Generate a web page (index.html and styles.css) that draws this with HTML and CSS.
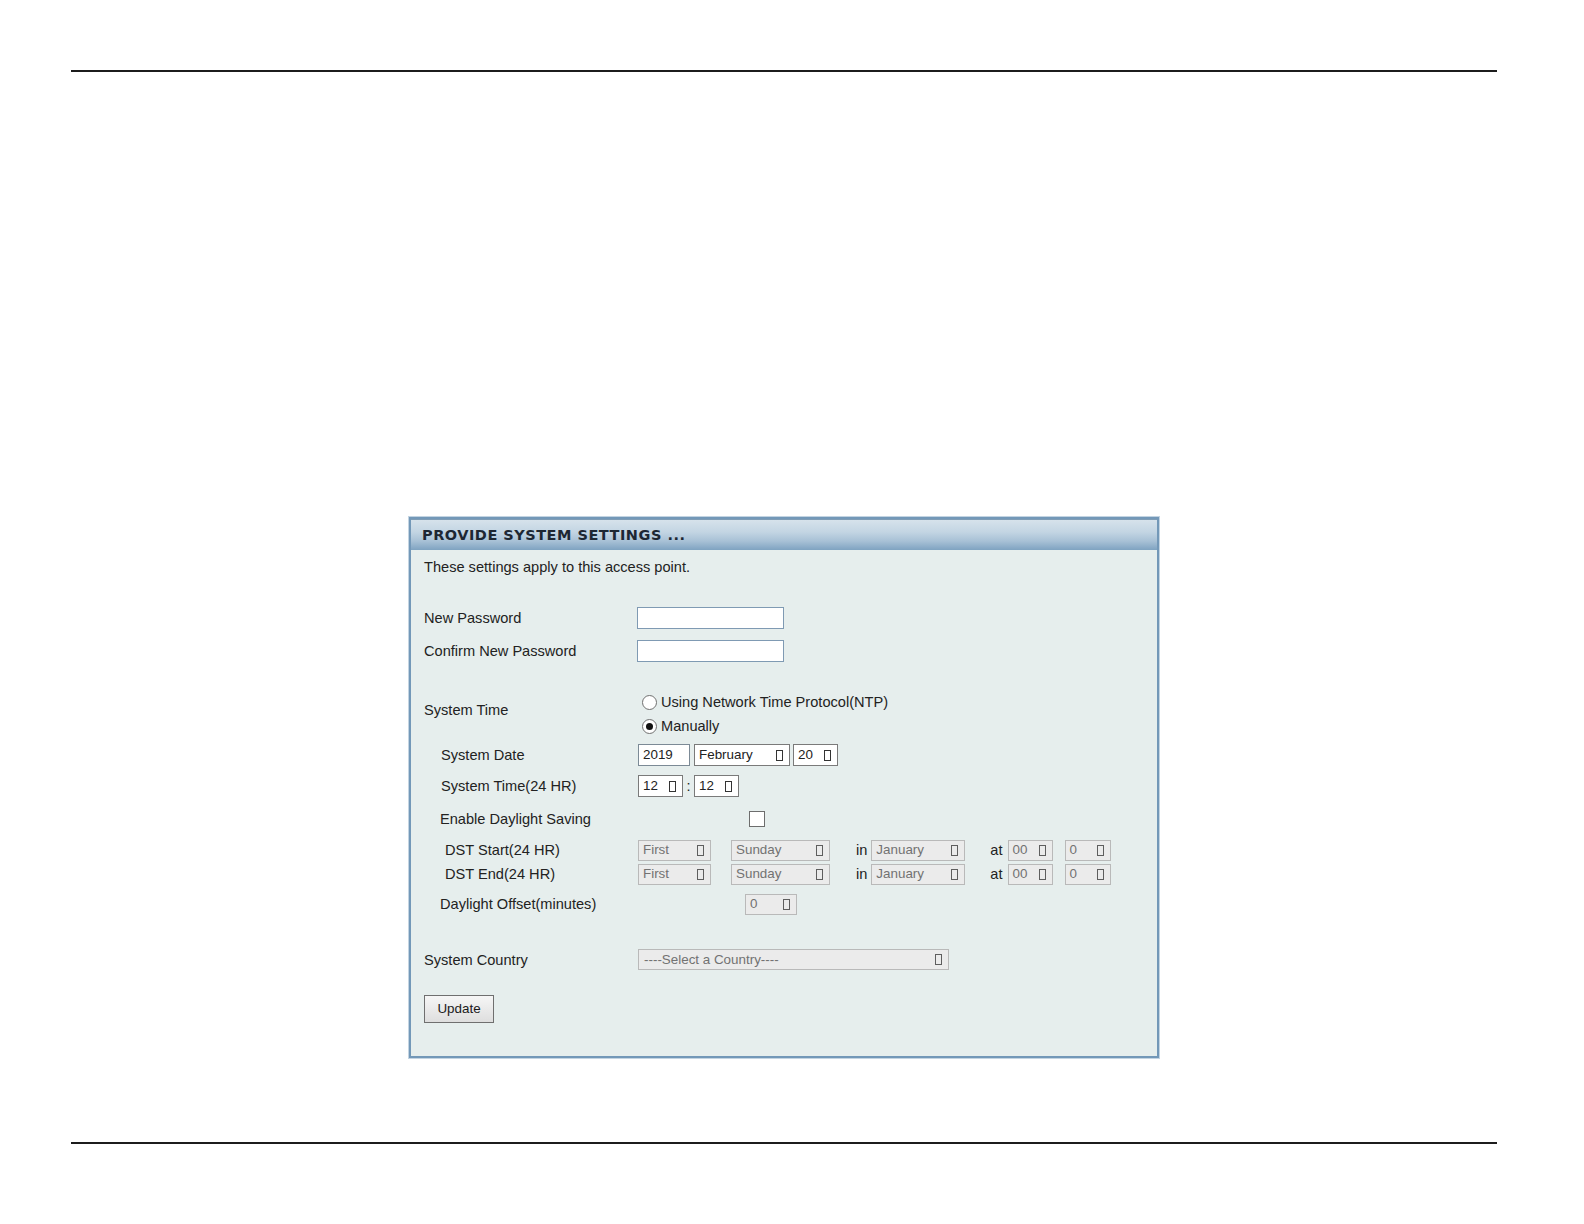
FILE: index.html
```html
<!DOCTYPE html>
<html>
<head>
<meta charset="utf-8">
<title>Provide System Settings</title>
<link rel="stylesheet" href="styles.css">
</head>
<body>
<div class="page">
  <div class="rule rule-top"></div>

  <div class="panel">
    <div class="panel-head">PROVIDE SYSTEM SETTINGS ...</div>
    <div class="panel-body">
      <div class="intro">These settings apply to this access point.</div>

      <div class="row row-pw">
        <div class="label">New Password</div>
        <div class="input pw"></div>
      </div>
      <div class="row row-pw2">
        <div class="label">Confirm New Password</div>
        <div class="input pw"></div>
      </div>

      <div class="row row-time">
        <div class="label label-time">System Time</div>
        <div class="radios">
          <div class="radio-line"><span class="radio"></span><span>Using Network Time Protocol(NTP)</span></div>
          <div class="radio-line"><span class="radio checked"></span><span>Manually</span></div>
        </div>
      </div>

      <div class="row row-date">
        <div class="label sub">System Date</div>
        <div class="input year">2019</div>
        <div class="select month">February<span class="arrow"></span></div>
        <div class="select day">20<span class="arrow"></span></div>
      </div>

      <div class="row row-clock">
        <div class="label sub">System Time(24 HR)</div>
        <div class="select hr">12<span class="arrow"></span></div>
        <div class="colon">:</div>
        <div class="select hr">12<span class="arrow"></span></div>
      </div>

      <div class="row row-dst">
        <div class="label sub2">Enable Daylight Saving</div>
        <span class="checkbox"></span>
      </div>

      <div class="row row-dst-start">
        <div class="label sub3">DST Start(24 HR)</div>
        <div class="select dis w-first">First<span class="arrow"></span></div>
        <div class="select dis w-week">Sunday<span class="arrow"></span></div>
        <div class="word word-in">in</div>
        <div class="select dis w-month">January<span class="arrow"></span></div>
        <div class="word word-at">at</div>
        <div class="select dis w-hr">00<span class="arrow"></span></div>
        <div class="select dis w-min">0<span class="arrow"></span></div>
      </div>
      <div class="row row-dst-end">
        <div class="label sub3">DST End(24 HR)</div>
        <div class="select dis w-first">First<span class="arrow"></span></div>
        <div class="select dis w-week">Sunday<span class="arrow"></span></div>
        <div class="word word-in">in</div>
        <div class="select dis w-month">January<span class="arrow"></span></div>
        <div class="word word-at">at</div>
        <div class="select dis w-hr">00<span class="arrow"></span></div>
        <div class="select dis w-min">0<span class="arrow"></span></div>
      </div>

      <div class="row row-offset">
        <div class="label sub2">Daylight Offset(minutes)</div>
        <div class="select dis w-offset">0<span class="arrow"></span></div>
      </div>

      <div class="row row-country">
        <div class="label">System Country</div>
        <div class="select dis w-country">----Select a Country----<span class="arrow"></span></div>
      </div>

      <div class="row row-btn">
        <div class="button">Update</div>
      </div>
    </div>
  </div>

  <div class="rule rule-bottom"></div>
</div>
</body>
</html>
```

FILE: styles.css
```css
html, body {
  margin: 0;
  padding: 0;
  background: #ffffff;
}

.page {
  width: 1584px;
  height: 1224px;
  padding-top: 70px;
  box-sizing: border-box;
  font-family: "Liberation Sans", Arial, sans-serif;
  color: #222222;
}

.rule {
  margin-left: 71px;
  width: 1426px;
  height: 2px;
  background: #1c1c1c;
}

.rule-bottom {
  margin-top: 84px;
}

.panel {
  margin-top: 445px;
  margin-left: 409px;
  width: 750px;
  box-sizing: border-box;
  border: 2px solid #7398b8;
  box-shadow: 0 0 0 1px #c3d4e2;
  background: #e6eeed;
}

.panel-head {
  height: 31px;
  box-sizing: border-box;
  border-top: 1px solid #7f9db6;
  padding-left: 11px;
  background: linear-gradient(#d6e2eb 0%, #c3d5e3 40%, #a8c1d6 70%, #7fa3c1 100%);
  font-family: "DejaVu Sans", Verdana, sans-serif;
  font-weight: bold;
  font-size: 14.5px;
  letter-spacing: 0.5px;
  line-height: 30px;
  color: #1d2733;
}

.panel-body {
  padding: 8px 0 33px 13px;
  font-size: 14.6px;
}

.intro {
  height: 18px;
  line-height: 18px;
}

.row {
  display: flex;
  align-items: center;
  height: 22px;
}

.label {
  width: 214px;
  flex: none;
  box-sizing: border-box;
  white-space: nowrap;
}

.label.sub { padding-left: 17px; }
.label.sub2 { padding-left: 16px; }
.label.sub3 { padding-left: 21px; }

.row-pw { margin-top: 31px; }
.row-pw2 { margin-top: 11px; }

.row-time {
  margin-top: 28px;
  height: 48px;
  align-items: flex-start;
}
.label-time {
  padding-top: 11px;
  line-height: 18px;
}
.radios {
  display: flex;
  flex-direction: column;
  margin-left: 4px;
}
.radio-line {
  display: flex;
  align-items: center;
  height: 24px;
}
.radio {
  width: 15px;
  height: 15px;
  box-sizing: border-box;
  border: 1px solid #707070;
  border-radius: 50%;
  background: #ffffff;
  margin-right: 4px;
  display: flex;
  align-items: center;
  justify-content: center;
}
.radio.checked::after {
  content: "";
  width: 7px;
  height: 7px;
  border-radius: 50%;
  background: #111111;
}

.row-date { margin-top: 6px; }
.row-clock { margin-top: 9px; }
.row-dst { margin-top: 11px; }
.row-dst-start { margin-top: 9px; }
.row-dst-end { margin-top: 2px; }
.row-offset { margin-top: 8px; }
.row-country { margin-top: 34px; height: 21px; }
.row-btn { margin-top: 25px; height: 28px; }

.input {
  height: 22px;
  box-sizing: border-box;
  border: 1px solid #7c8a96;
  background: #ffffff;
  font-size: 13.4px;
  line-height: 20px;
  padding-left: 4px;
}
.input.pw {
  width: 147px;
  margin-left: -1px;
  border-color: #7f9ab3;
}
.input.year { width: 52px; margin-right: 4px; }

.select {
  height: 22px;
  box-sizing: border-box;
  border: 1px solid #7a7a7a;
  background: #ffffff;
  font-size: 13.4px;
  line-height: 20px;
  padding-left: 4px;
  padding-right: 6px;
  display: flex;
  align-items: center;
  flex: none;
  white-space: nowrap;
}
.arrow {
  margin-left: auto;
  width: 7px;
  height: 11px;
  box-sizing: border-box;
  border: 1px solid #333333;
  flex: none;
}

.select.month { width: 96px; margin-right: 3px; }
.select.day { width: 45px; }
.select.hr { width: 45px; }
.colon {
  width: 11px;
  text-align: center;
}

.select.dis {
  background: #ebebeb;
  border-color: #b9b9b9;
  color: #727272;
  height: 21px;
}
.select.dis .arrow { border-color: #5e5e5e; }

.w-first { width: 73px; margin-right: 20px; }
.w-week { width: 99px; }
.word { color: #222222; }
.word-in { margin-left: 26px; margin-right: 4px; }
.w-month { width: 94px; }
.word-at { margin-left: 25px; margin-right: 5px; }
.w-hr { width: 45px; margin-right: 12px; }
.w-min { width: 46px; }
.w-offset { width: 52px; margin-left: 107px; }
.w-country { width: 311px; padding-left: 5px; padding-right: 6px; }

.checkbox {
  width: 16px;
  height: 16px;
  box-sizing: border-box;
  border: 1px solid #6d6d6d;
  background: #ffffff;
  margin-left: 111px;
}

.button {
  width: 70px;
  height: 28px;
  box-sizing: border-box;
  border: 1px solid #6f6f6f;
  background: linear-gradient(#f6f6f6, #dedede);
  font-size: 13.4px;
  line-height: 26px;
  text-align: center;
  color: #1a1a1a;
}
```
